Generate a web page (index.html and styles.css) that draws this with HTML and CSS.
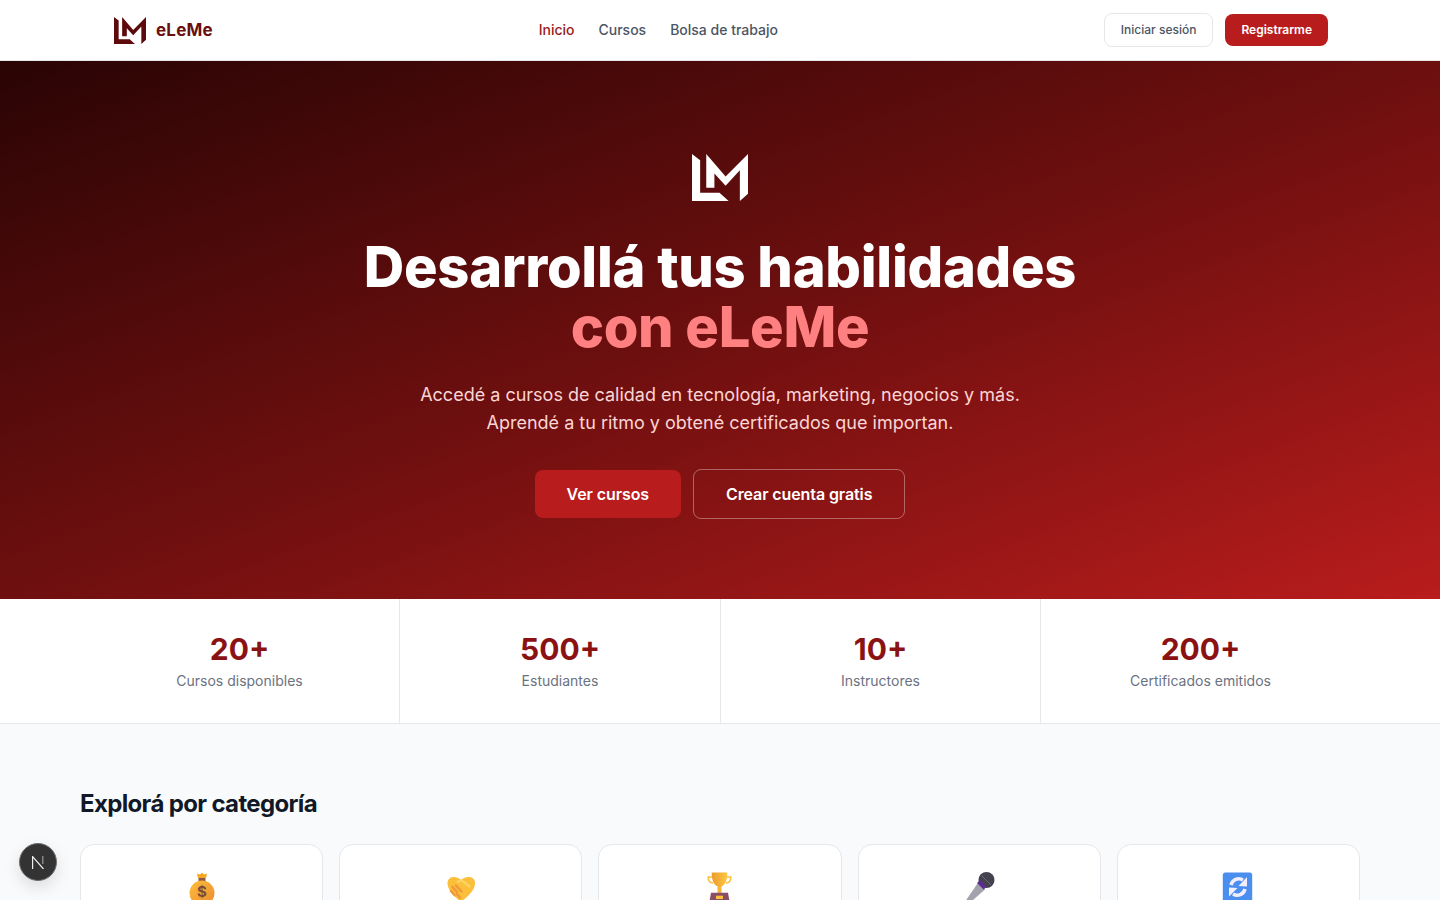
FILE: index.html
```html
<!DOCTYPE html>
<html lang="es">
  <head>
    <meta charset="UTF-8" />
    <meta name="viewport" content="width=device-width, initial-scale=1.0" />
    <title>eLeMe</title>
    <link rel="stylesheet" href="styles.css">
  </head>
  <body>
    <header>
      <div class="header-inner">
        <a href="#" class="logo">
          <svg class="logo-mark" viewBox="0 0 55 46"><path d="M0 0 8 6V38H27L36 46H0ZM14 0 33 22 55 0V39L47 46V16L33 31 22 19V33H14Z"/></svg>
          <span>eLeMe</span>
        </a>
        <nav>
          <a href="#" class="active">Inicio</a>
          <a href="#">Cursos</a>
          <a href="#">Bolsa de trabajo</a>
        </nav>
        <div class="auth">
          <a href="#" class="btn-login">Iniciar sesión</a>
          <a href="#" class="btn-register">Registrarme</a>
        </div>
      </div>
    </header>

    <section class="hero">
      <svg class="hero-mark" viewBox="0 0 55 46"><path d="M0 0 8 6V38H27L36 46H0ZM14 0 33 22 55 0V39L47 46V16L33 31 22 19V33H14Z"/></svg>
      <h1>Desarrollá tus habilidades<br /><span>con eLeMe</span></h1>
      <p>Accedé a cursos de calidad en tecnología, marketing, negocios y más.<br />Aprendé a tu ritmo y obtené certificados que importan.</p>
      <div class="hero-actions">
        <a href="#" class="btn-primary">Ver cursos</a>
        <a href="#" class="btn-outline">Crear cuenta gratis</a>
      </div>
    </section>

    <section class="stats">
      <div class="stat"><strong>20+</strong><span>Cursos disponibles</span></div>
      <div class="stat"><strong>500+</strong><span>Estudiantes</span></div>
      <div class="stat"><strong>10+</strong><span>Instructores</span></div>
      <div class="stat"><strong>200+</strong><span>Certificados emitidos</span></div>
    </section>

    <section class="categories">
      <h2>Explorá por categoría</h2>
      <div class="category-grid">
        <div class="category">
          <svg viewBox="0 0 32 32">
            <defs>
              <linearGradient id="bag" x1="0" y1="0" x2="1" y2="1">
                <stop offset="0" stop-color="#fbbf3c" />
                <stop offset="1" stop-color="#ee8a2e" />
              </linearGradient>
              <linearGradient id="cup" x1="0" y1="0" x2="1" y2="0">
                <stop offset="0" stop-color="#ee9a30" />
                <stop offset="1" stop-color="#fcc83f" />
              </linearGradient>
            </defs>
            <rect x="12.500" y="5" width="7" height="5" fill="#8a5a44"/>
            <path d="M11 1.500 13.800 2.600 16 .8 18.200 2.600 21 1.500 20 6H12Z" fill="#f5a623"/>
            <circle cx="16" cy="21" r="12.500" fill="url(#bag)"/>
            <text x="16" y="25" class="money">$</text>
          </svg>
        </div>
        <div class="category">
          <svg viewBox="0 0 32 32">
            <path d="M16 8C12 4 3 3 2.500 11 2.500 19 11 26 16 30 21 26 30 19 30 11 30 3 20 4 16 8Z" fill="#fbbf3c"/>
            <path d="M12 10 17 8.500 25 15" fill="none" stroke="#fdd45f" stroke-width="2.500"/>
            <path d="M7.500 15 12 20M11 13.500 16.500 19.500M6 19 9.500 23M12 22 15 25.500" fill="none" stroke="#ee9a3a" stroke-width="2.500" stroke-linecap="round"/>
          </svg>
        </div>
        <div class="category">
          <svg viewBox="0 0 32 32">
            <path d="M8 5H4.200C4.200 9.500 6 11 9 11M23 5H26.800C26.800 9.500 25 11 22 11" fill="none" stroke="#f9c13c" stroke-width="1.600"/>
            <path d="M7.700 .5H23.300C23.300 9 21 14 15.500 15 10 14 7.700 9 7.700 .5Z" fill="url(#cup)"/>
            <rect x="13.500" y="14" width="4" height="7" fill="#f5b638"/>
            <path d="M5 32 7 20.700H24L26 32Z" fill="#8a4f66"/>
            <rect x="12" y="23.700" width="7" height="3.300" fill="#f9c13c"/>
          </svg>
        </div>
        <div class="category">
          <svg viewBox="0 0 32 32">
            <path d="M15.500 10 22.500 17 5.500 32H.5Z" fill="#a3a3ad"/>
            <circle cx="23.500" cy="8" r="8" fill="#44424f"/>
            <path d="M15.500 9.500 22 16" fill="none" stroke="#5c2d91" stroke-width="4"/>
            <path d="M18.500 3.500 28 13" fill="none" stroke="#6a6878" stroke-width="1"/>
          </svg>
        </div>
        <div class="category">
          <svg viewBox="0 0 32 32">
            <rect x=".8" y=".5" width="29.400" height="32" rx="2.500" fill="#4a8ef0"/>
            <path d="M9 13A8 8 0 0 1 21 8M23 17A8 8 0 0 1 11 22" fill="none" stroke="#f3eefc" stroke-width="3.500"/>
            <path d="M25 5V14.500L16.500 14ZM7 24.500V15.500L15.500 16Z" fill="#f3eefc"/>
          </svg>
        </div>
      </div>
    </section>

    <div class="dev-badge">
      <svg viewBox="0 0 12 13">
        <path d="M.6 13V.6L11.500 13" fill="none" stroke="#eeeeee" stroke-width="1.200"/>
        <path d="M10.800 0V8" fill="none" stroke="#9a9a9a" stroke-width="1.200"/>
      </svg>
    </div>
  </body>
</html>
```

FILE: styles.css
```css
* {
  margin: 0;
  padding: 0;
  box-sizing: border-box;
  font-family: Inter, "Liberation Sans", sans-serif;
}

html,
body {
  height: 900px;
  overflow: hidden;
}

body {
  background-color: #f9fafb;
  color: #111827;
}

a {
  text-decoration: none;
}

header {
  background: white;
  height: 61px;
  border-bottom: 1px solid #e5e7eb;
}

.header-inner {
  max-width: 1280px;
  height: 60px;
  margin: 0 auto;
  padding: 0 32px 0 34px;
  display: flex;
  justify-content: space-between;
  align-items: center;
}

.logo {
  display: flex;
  align-items: center;
  gap: 10px;
  color: #6b0e0e;
  font-weight: 700;
  font-size: 17px;
  letter-spacing: 0.2px;
}

.logo-mark {
  width: 32px;
  height: 27px;
  fill: #5c0a0c;
}

nav {
  display: flex;
  gap: 24px;
  padding-bottom: 2px;
}

nav a {
  color: #4b5563;
  font-size: 14px;
  font-weight: 500;
}

nav a.active {
  color: #991b1b;
}

.auth {
  display: flex;
  align-items: center;
  gap: 12px;
}

.btn-login,
.btn-register {
  font-size: 12px;
  font-weight: 500;
  border-radius: 8px;
  padding: 0 16px 1px;
  height: 32px;
  display: flex;
  align-items: center;
}

.btn-login {
  height: 34px;
  color: #4b5563;
  border: 1px solid #e5e7eb;
}

.btn-register {
  color: white;
  background-color: #b91c1c;
  font-weight: 600;
}

.hero {
  height: 538px;
  background: linear-gradient(160deg, #2a0404 0%, #6e0f0f 50%, #b91c1c 100%);
  display: flex;
  flex-direction: column;
  align-items: center;
  text-align: center;
  padding-top: 93px;
}

.hero-mark {
  width: 56px;
  height: 47px;
  fill: white;
}

h1 {
  margin-top: 36px;
  font-size: 56px;
  line-height: 60px;
  font-weight: 800;
  letter-spacing: -0.28px;
  color: white;
}

h1 span {
  color: #ff8080;
}

.hero p {
  margin-top: 24px;
  font-size: 18px;
  line-height: 28px;
  color: #fbd5d5;
}

.hero-actions {
  margin-top: 32px;
  display: flex;
  align-items: center;
  gap: 12px;
}

.btn-primary,
.btn-outline {
  display: flex;
  align-items: center;
  color: white;
  font-size: 16px;
  font-weight: 600;
  letter-spacing: -0.1px;
  border-radius: 8px;
}

.btn-primary {
  height: 48px;
  padding: 0 32px;
  background-color: #b91c1c;
}

.btn-outline {
  height: 50px;
  padding: 0 32px;
  border: 1px solid rgba(255, 255, 255, 0.35);
}

.stats {
  height: 125px;
  padding: 0 80px;
  background: white;
  border-bottom: 1px solid #e5e7eb;
  display: grid;
  grid-template-columns: 320px 321px 320px 319px;
}

.stat {
  display: flex;
  flex-direction: column;
  align-items: center;
  padding-top: 30px;
  border-right: 1px solid #e5e7eb;
}

.stat:last-child {
  border-right: none;
}

.stat strong {
  font-size: 30px;
  line-height: 40px;
  font-weight: 700;
  color: #8b1212;
}

.stat span {
  margin-top: 2px;
  font-size: 14px;
  line-height: 20px;
  color: #6b7280;
}

.categories {
  padding: 64px 80px 0;
}

h2 {
  font-size: 24px;
  line-height: 32px;
  font-weight: 700;
  letter-spacing: -0.65px;
  color: #111827;
}

.category-grid {
  margin-top: 24px;
  display: grid;
  grid-template-columns: repeat(5, 1fr);
  gap: 16px;
}

.category {
  height: 160px;
  background: white;
  border: 1px solid #e5e7eb;
  border-radius: 14px;
  display: flex;
  justify-content: center;
  padding-top: 27px;
}

.category svg {
  width: 32px;
  height: 32px;
}

.money {
  font-size: 15px;
  font-weight: 700;
  fill: #7a4a3a;
  text-anchor: middle;
}

.dev-badge {
  position: absolute;
  left: 19px;
  top: 843px;
  width: 38px;
  height: 38px;
  border-radius: 50%;
  background: #333333;
  border: 1px solid #6f6f6f;
  box-shadow: 0 6px 16px rgba(0, 0, 0, 0.12);
  display: flex;
  align-items: center;
  justify-content: center;
}

.dev-badge svg {
  width: 12px;
  height: 13px;
}
```
